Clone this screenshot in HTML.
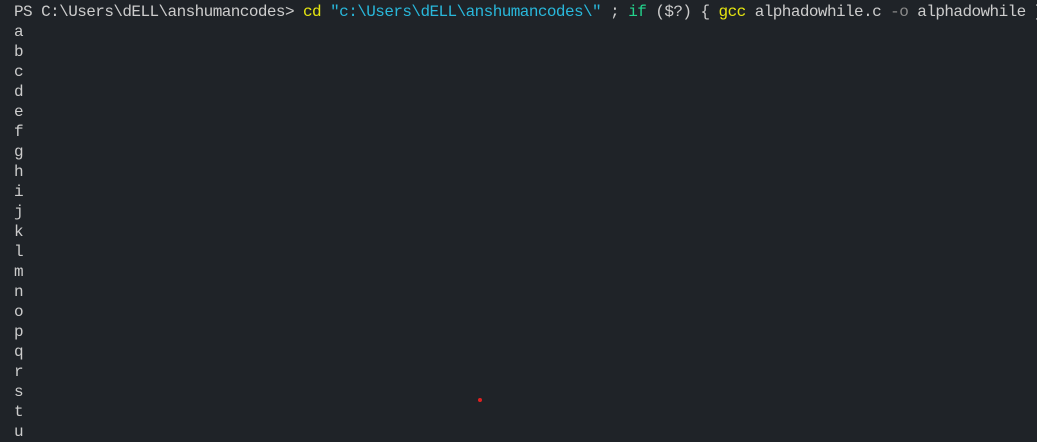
<!DOCTYPE html>
<html><head><meta charset="utf-8"><style>
html,body{margin:0;padding:0;width:1037px;height:438px;overflow:hidden;background:#1f2328;}
pre{margin:0;position:absolute;left:14px;top:2px;font-family:"Liberation Mono",monospace;font-size:16px;letter-spacing:-0.57px;line-height:20px;color:#cccccc;white-space:pre;}
.y{color:#e5e510}.c{color:#29b8db}.g{color:#23d18b}.d{color:#8a8a8a}
.dot{position:absolute;left:478px;top:398px;width:4px;height:4px;border-radius:50%;background:#e02020;}
</style></head><body>
<pre>PS C:\Users\dELL\anshumancodes&gt; <span class="y">cd</span> <span class="c">"c:\Users\dELL\anshumancodes\"</span> ; <span class="g">if</span> ($?) { <span class="y">gcc</span> alphadowhile.c <span class="d">-o</span> alphadowhile }
a
b
c
d
e
f
g
h
i
j
k
l
m
n
o
p
q
r
s
t
u</pre>
<div class="dot"></div>
</body></html>
